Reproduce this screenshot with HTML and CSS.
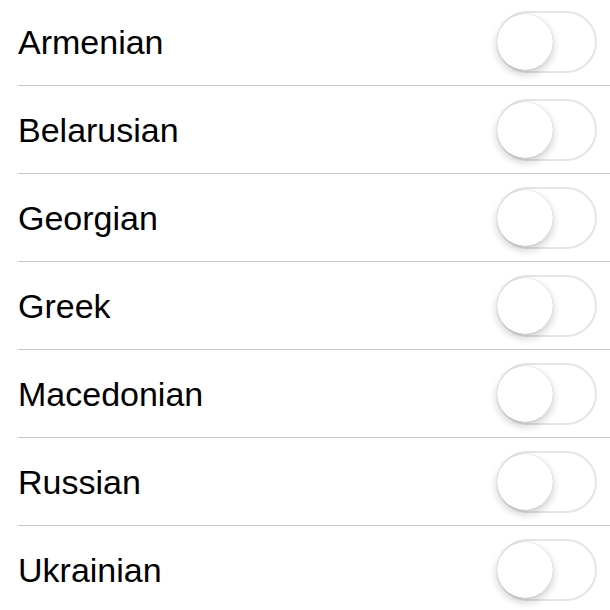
FILE: index.html
```html
<!DOCTYPE html>
<html>
<head>
<meta charset="utf-8">
<link rel="stylesheet" href="styles.css">
</head>
<body>
<div class="list">
  <div class="row"><div class="row-inner"><span class="label">Armenian</span><span class="switch"><span class="knob"></span></span></div></div>
  <div class="row"><div class="row-inner"><span class="label">Belarusian</span><span class="switch"><span class="knob"></span></span></div></div>
  <div class="row"><div class="row-inner"><span class="label">Georgian</span><span class="switch"><span class="knob"></span></span></div></div>
  <div class="row"><div class="row-inner"><span class="label">Greek</span><span class="switch"><span class="knob"></span></span></div></div>
  <div class="row"><div class="row-inner"><span class="label">Macedonian</span><span class="switch"><span class="knob"></span></span></div></div>
  <div class="row"><div class="row-inner"><span class="label">Russian</span><span class="switch"><span class="knob"></span></span></div></div>
  <div class="row"><div class="row-inner"><span class="label">Ukrainian</span><span class="switch"><span class="knob"></span></span></div></div>
</div>
</body>
</html>
```
FILE: styles.css
```css
html, body {
  margin: 0;
  padding: 0;
  background: #ffffff;
  overflow: hidden;
}
.list {
  margin-top: -2px;
  font-family: "Liberation Sans", Arial, sans-serif;
}
.row {
  padding-left: 18px;
}
.row-inner {
  display: flex;
  align-items: center;
  justify-content: space-between;
  height: 87px;
  border-bottom: 1px solid #c8c7cc;
  padding-right: 13px;
}
.label {
  font-size: 34px;
  color: #000000;
  padding-top: 2px;
}
.switch {
  position: relative;
  box-sizing: border-box;
  width: 100px;
  height: 62px;
  border: 2px solid #e5e5e5;
  border-radius: 31px;
  background: #ffffff;
}
.knob {
  position: absolute;
  left: -2px;
  top: 1px;
  width: 56px;
  height: 56px;
  border-radius: 50%;
  background: #ffffff;
  box-shadow: 0 0 1px rgba(0, 0, 0, 0.3), 0 4px 8px rgba(0, 0, 0, 0.2);
}
```
